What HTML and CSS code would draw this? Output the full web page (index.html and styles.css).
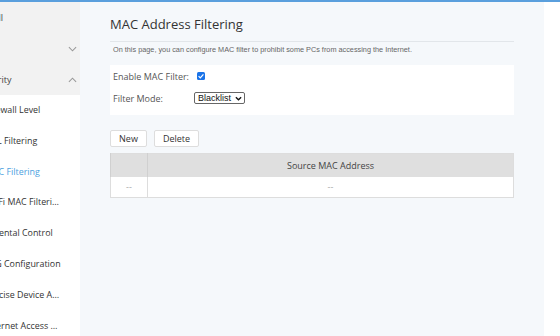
FILE: index.html
```html
<!DOCTYPE html>
<html>
<head>
<meta charset="utf-8">
<link rel="stylesheet" href="styles.css">
</head>
<body>
<div class="topline"></div>
<div class="app">
  <nav class="sidebar">
    <div class="side-inner">
      <div class="group">
        <div class="item"><span>Install</span></div>
        <div class="item"><span>LAN</span><svg class="chev" viewBox="0 0 10 6" width="9" height="6"><path d="M1 1l4 4 4-4" fill="none" stroke="#999" stroke-width="1.2"/></svg></div>
        <div class="item"><span>Security</span><svg class="chev" viewBox="0 0 10 6" width="9" height="6"><path d="M1 5l4-4 4 4" fill="none" stroke="#999" stroke-width="1.2"/></svg></div>
      </div>
      <ul class="sub">
        <li>Firewall Level</li>
        <li>URL Filtering</li>
        <li class="active">MAC Filtering</li>
        <li>Wi-Fi MAC Filtering</li>
        <li>Parental Control</li>
        <li>ALG Configuration</li>
        <li>Precise Device Access</li>
        <li>Internet Access Control</li>
      </ul>
    </div>
  </nav>
  <main class="content">
    <section class="panel">
      <h1 class="title">MAC Address Filtering</h1>
      <p class="desc">On this page, you can configure MAC filter to prohibit some PCs from accessing the Internet.</p>
      <div class="form">
        <div class="row"><label class="lbl">Enable MAC Filter:</label><span class="check"><svg viewBox="0 0 8 8" width="8" height="8"><path d="M1.6 4.1l1.7 1.7 3.1-3.5" fill="none" stroke="#fff" stroke-width="1.2"/></svg></span></div>
        <div class="row"><label class="lbl">Filter Mode:</label><span class="select">Blacklist<svg viewBox="0 0 8 5" width="7" height="5"><path d="M1 1l3 3 3-3" fill="none" stroke="#111" stroke-width="1.5"/></svg></span></div>
      </div>
      <div class="btns"><button class="btn btn-new">New</button><button class="btn btn-del">Delete</button></div>
      <table class="tbl">
        <thead><tr><th class="c1"></th><th>Source MAC Address</th></tr></thead>
        <tbody><tr><td class="c1">--</td><td>--</td></tr></tbody>
      </table>
    </section>
  </main>
</div>
</body>
</html>
```
FILE: styles.css
```css
* { box-sizing: border-box; }
html, body { margin: 0; padding: 0; }
body { width: 560px; height: 336px; overflow: hidden; background: #fff; font-family: "Open Sans", "Noto Sans", sans-serif; }
.topline { height: 2px; background: #5a9fdd; }
.app { display: flex; height: 334px; }
.sidebar { width: 80px; flex: none; overflow: hidden; background: #fff; }
.side-inner { width: 180px; margin-left: -100px; }
.group { background: #f2f2f2; }
.item { height: 31px; display: flex; align-items: center; justify-content: space-between; padding-left: 78px; padding-right: 3px; font-size: 9px; color: #444; }
.sub { list-style: none; margin: 0; padding: 0; }
.sub li { width: 161px; height: 30.8px; line-height: 30.8px; padding-left: 85px; font-size: 8.9px; color: #333; white-space: nowrap; overflow: hidden; text-overflow: ellipsis; }
.sub li.active { color: #4ea2e0; }
.content { width: 464px; flex: none; background: #f5f8fb; padding: 13px 30px 0 30px; }
.title { margin: 0; font-weight: normal; font-size: 13px; color: #333; height: 27px; line-height: 18px; border-bottom: 1px solid #e2e6ea; }
.desc { margin: 3px 0 0 3px; font-family: "Liberation Sans", Arial, sans-serif; font-size: 7.3px; line-height: 10px; color: #666; height: 14px; }
.form { background: #fff; margin-top: 6px; padding: 0 3px 6px 3px; }
.row { display: flex; align-items: center; height: 22px; font-size: 9px; color: #555; }
.lbl { width: 81px; }
.check { width: 8px; height: 8px; background: #1a73e8; border-radius: 1.5px; display: flex; align-items: center; justify-content: center; margin-left: 3px; }
.select { display: inline-flex; align-items: center; gap: 4px; height: 12px; padding: 0 2px 0 3px; border: 1px solid #666; border-radius: 2px; background: #fff; color: #111; font-family: "Liberation Sans", Arial, sans-serif; font-size: 9px; }
.btns { display: flex; gap: 7px; margin-top: 15px; }
.btn { height: 17px; padding: 0; background: #fff; border: 1px solid #ddd; border-radius: 2px; font-family: "Open Sans", sans-serif; font-size: 9px; color: #333; }
.btn-new { width: 37px; }
.btn-del { width: 45px; }
.tbl { width: 404px; margin-top: 6px; border-collapse: collapse; border: 1px solid #ddd; font-size: 9px; color: #444; }
.tbl th { height: 23px; background: #dfdfdf; font-weight: normal; border-left: 1px solid #d0d0d0; }
.tbl td { height: 21px; background: #fff; text-align: center; color: #aaa; border-left: 1px solid #ddd; }
.tbl .c1 { width: 37px; }
```
